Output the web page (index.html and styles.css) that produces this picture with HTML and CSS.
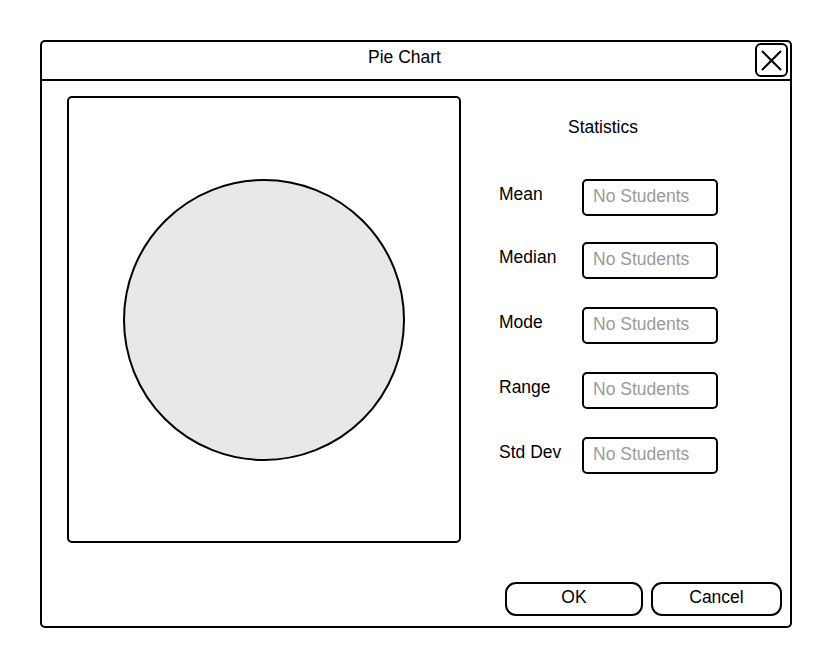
FILE: index.html
```html
<!DOCTYPE html>
<html>
<head>
<meta charset="utf-8">
<link rel="stylesheet" href="styles.css">
</head>
<body>
<div class="dialog">
  <div class="header">
    <div class="title">Pie Chart</div>
    <div class="close">
      <svg width="25" height="25" viewBox="0 0 25 25"><path d="M3 3 L22 22 M22 3 L3 22" stroke="#000" stroke-width="2" fill="none"/></svg>
    </div>
  </div>
  <div class="content">
    <div class="main">
      <div class="chart">
        <div class="pie"></div>
      </div>
      <div class="stats">
        <div class="stats-title">Statistics</div>
        <div class="rows">
          <div class="row"><div class="label">Mean</div><div class="field">No Students</div></div>
          <div class="row row-2"><div class="label">Median</div><div class="field">No Students</div></div>
          <div class="row"><div class="label">Mode</div><div class="field">No Students</div></div>
          <div class="row"><div class="label">Range</div><div class="field">No Students</div></div>
          <div class="row"><div class="label">Std Dev</div><div class="field">No Students</div></div>
        </div>
      </div>
    </div>
    <div class="footer">
      <div class="btn btn-ok">OK</div>
      <div class="btn btn-cancel">Cancel</div>
    </div>
  </div>
</div>
</body>
</html>
```
FILE: styles.css
```css
* { box-sizing: border-box; }
html, body { margin: 0; padding: 0; background: #fff; }
body {
  font-family: "Liberation Sans", Arial, sans-serif;
  font-size: 17.5px;
  color: #000;
  padding: 40px 0 0 40px;
}
.dialog {
  width: 752px;
  height: 588px;
  border: 2px solid #000;
  border-radius: 5px;
  background: #fff;
  display: flex;
  flex-direction: column;
}
.header {
  height: 39px;
  border-bottom: 2px solid #000;
  display: flex;
  align-items: flex-start;
}
.title {
  flex: 1;
  text-align: center;
  padding-left: 12px;
  line-height: 20px;
  margin-top: 5px;
}
.close {
  width: 33px;
  height: 34px;
  border: 2px solid #000;
  border-radius: 6px;
  margin-top: 1px;
  margin-right: 2px;
  display: flex;
  align-items: center;
  justify-content: center;
}
.close svg { display: block; }
.content {
  flex: 1;
  display: flex;
  flex-direction: column;
  justify-content: space-between;
  padding: 15px 8px 10px 25px;
}
.main {
  display: flex;
  align-items: flex-start;
}
.chart {
  width: 394px;
  height: 447px;
  border: 2px solid #000;
  border-radius: 5px;
  display: flex;
  align-items: center;
  justify-content: center;
}
.pie {
  width: 282px;
  height: 282px;
  border-radius: 50%;
  border: 2px solid #000;
  background: #e8e8e8;
}
.stats {
  margin-left: 38px;
  padding-top: 21px;
}
.stats-title {
  width: 208px;
  text-align: center;
  line-height: 20px;
}
.rows {
  margin-top: 42px;
  display: flex;
  flex-direction: column;
  gap: 28px;
}
.row-2 { margin-top: -2px; }
.row {
  display: flex;
  align-items: flex-start;
}
.label {
  width: 83px;
  line-height: 20px;
  padding-top: 5px;
}
.field {
  width: 136px;
  height: 37px;
  border: 2px solid #000;
  border-radius: 5px;
  color: #9a9a9a;
  padding-left: 9px;
  line-height: 31px;
}
.footer {
  display: flex;
  justify-content: flex-end;
  gap: 8px;
}
.btn {
  height: 34px;
  border: 2px solid #000;
  border-radius: 11px;
  text-align: center;
  line-height: 26px;
}
.btn-ok { width: 138px; }
.btn-cancel { width: 131px; }
```
